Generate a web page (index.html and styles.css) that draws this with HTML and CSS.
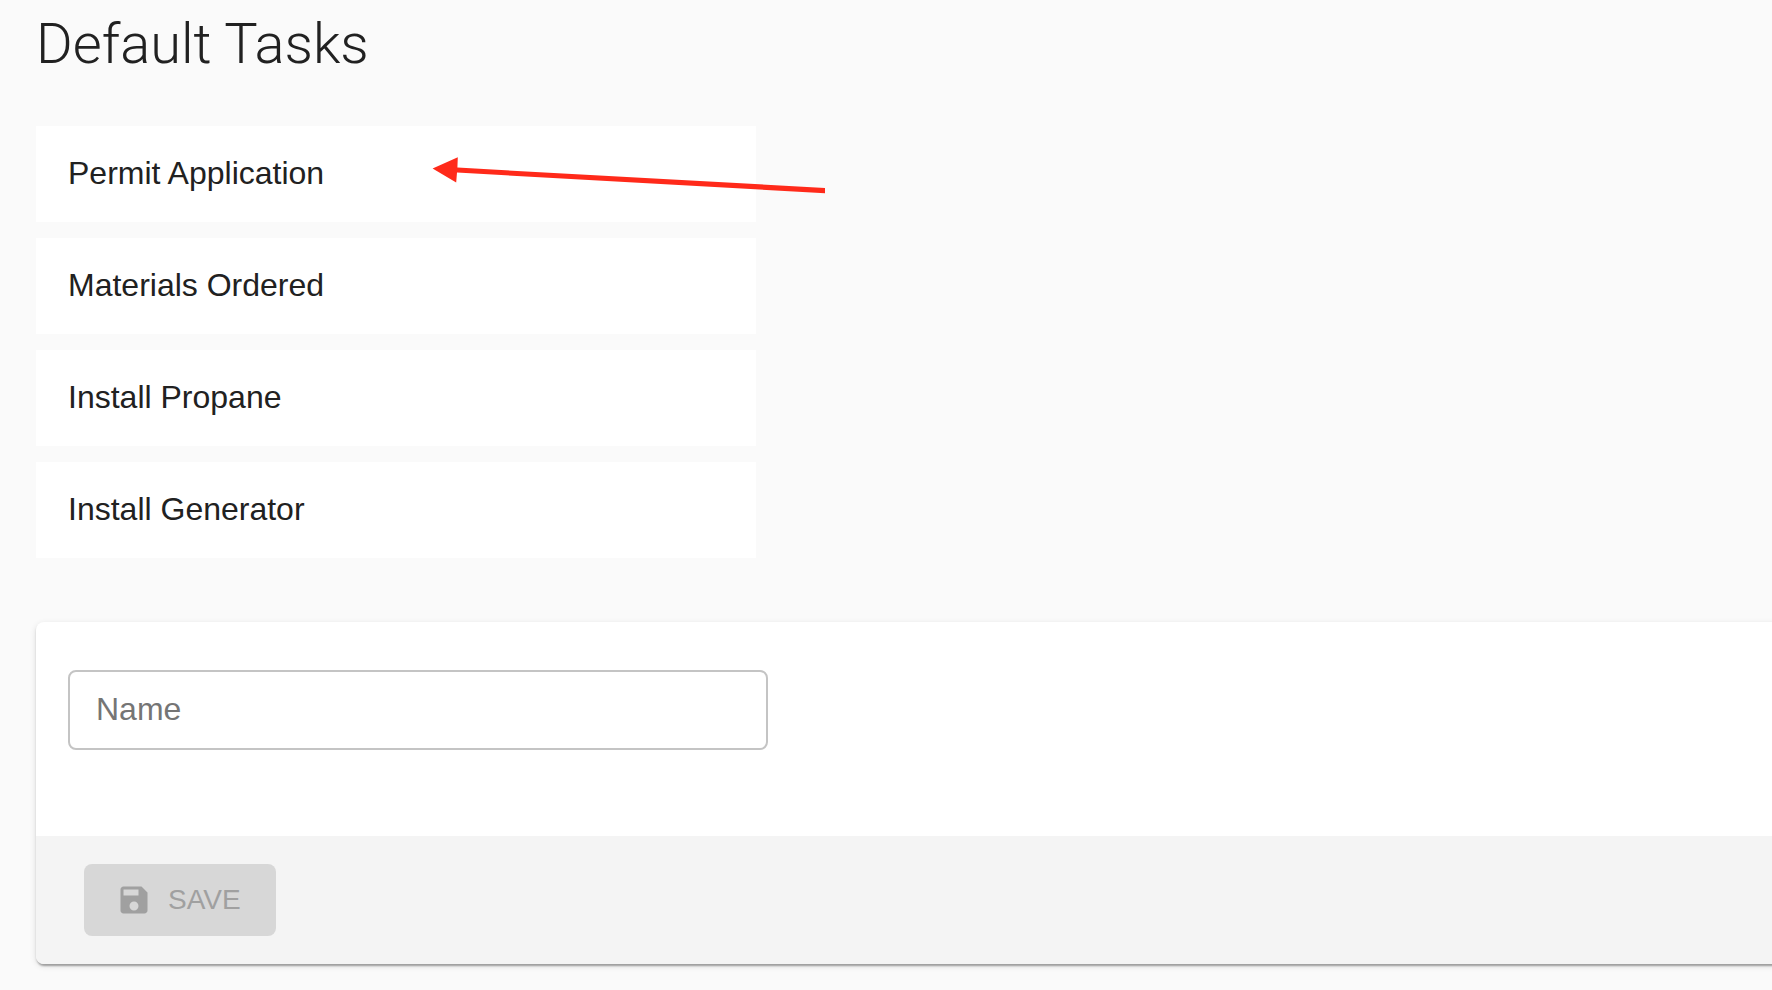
FILE: index.html
```html
<!DOCTYPE html>
<html lang="en">
<head>
  <meta charset="UTF-8">
  <meta name="viewport" content="width=device-width, initial-scale=1.0">
  <title>Default Tasks</title>
  <link rel="stylesheet" href="styles.css">
</head>

<body>
  <main class="page">
    <h1 class="page-title">Default Tasks</h1>

    <ul class="task-list">
      <li class="task">
        Permit Application
        <svg class="arrow" viewBox="0 0 400 40" aria-hidden="true">
          <path d="M3.6 12.5 28.8 1.3 28.4 11.6 396 32V37.3L28 16.6 27.2 26.5z" />
        </svg>
      </li>
      <li class="task">Materials Ordered</li>
      <li class="task">Install Propane</li>
      <li class="task">Install Generator</li>
    </ul>

    <form class="card">
      <div class="card-content">
        <input type="text" id="name" class="text-field" placeholder="Name" aria-label="Name">
      </div>
      <div class="card-actions">
        <button type="submit" class="save-button" disabled>
          <svg class="save-icon" viewBox="0 0 24 24" aria-hidden="true">
            <path d="M17 3H5c-1.11 0-2 .9-2 2v14c0 1.1.89 2 2 2h14c1.1 0 2-.9 2-2V7l-4-4zm-5 16c-1.66 0-3-1.34-3-3s1.34-3 3-3 3 1.34 3 3-1.34 3-3 3zm3-10H5V5h10v4z" />
          </svg>
          Save
        </button>
      </div>
    </form>
  </main>
</body>
</html>
```

FILE: styles.css
```css
:root {
  --bg-color: #fafafa;
  --paper-color: #ffffff;
  --text-color: #212121;
  --placeholder-color: #757575;
  --border-color: #c4c4c4;
  --actions-bg: #f4f4f4;
  --disabled-bg: #d7d7d7;
  --disabled-color: #a0a0a0;
  --arrow-color: #ff2a1a;
  --border-radius: 8px;
}

* {
  margin: 0;
  padding: 0;
  box-sizing: border-box;
}

body {
  font-family: "Liberation Sans", Arial, sans-serif;
  font-size: 32px;
  line-height: 48px;
  color: var(--text-color);
  background-color: var(--bg-color);
}

.page {
  padding: 8px 0 24px 36px;
  overflow-x: clip;
}

.page-title {
  font-family: Roboto, "Liberation Sans", sans-serif;
  font-size: 56px;
  font-weight: 300;
  line-height: 72px;
}

/* Task list */
.task-list {
  display: flex;
  flex-direction: column;
  gap: 16px;
  max-width: 720px;
  margin-top: 46px;
  list-style: none;
}

.task {
  position: relative;
  padding: 23px 32px 25px;
  background-color: var(--paper-color);
}

/* Arrow drawn over the first task */
.arrow {
  position: absolute;
  top: 30px;
  left: 393px;
  width: 400px;
  height: 40px;
  fill: var(--arrow-color);
}

/* New task form, runs past the right edge */
.card {
  margin-top: 64px;
  margin-right: -16px;
  border-radius: var(--border-radius);
  background-color: var(--paper-color);
  box-shadow: 0 4px 2px -2px rgba(0, 0, 0, 0.2), 0 2px 2px rgba(0, 0, 0, 0.14), 0 2px 6px rgba(0, 0, 0, 0.12);
}

.card-content {
  padding: 48px 32px 86px;
}

.text-field {
  display: block;
  width: 100%;
  max-width: 700px;
  height: 80px;
  padding: 0 26px 2px;
  border: 2px solid var(--border-color);
  border-radius: var(--border-radius);
  font: inherit;
  color: inherit;
  background-color: transparent;
}

.text-field::placeholder {
  color: var(--placeholder-color);
  opacity: 1;
}

.card-actions {
  display: flex;
  padding: 28px 48px;
  border-radius: 0 0 var(--border-radius) var(--border-radius);
  background-color: var(--actions-bg);
}

.save-button {
  display: flex;
  align-items: center;
  gap: 16px;
  min-width: 192px;
  padding: 12px 32px;
  border: none;
  border-radius: var(--border-radius);
  font: inherit;
  font-size: 28px;
  text-transform: uppercase;
  color: var(--disabled-color);
  background-color: var(--disabled-bg);
}

.save-icon {
  width: 36px;
  height: 36px;
  fill: currentColor;
}
```
